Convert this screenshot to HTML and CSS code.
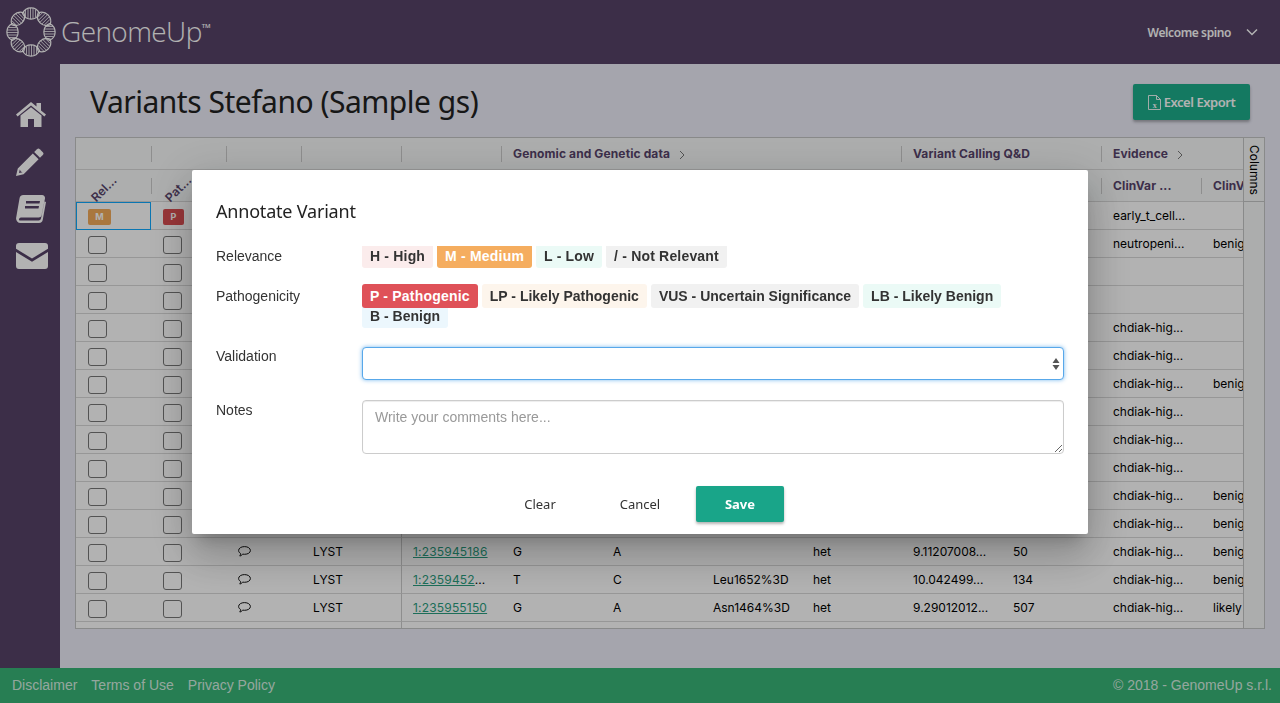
FILE: index.html
```html
<!DOCTYPE html>
<html lang="en">
<head>
<meta charset="utf-8">
<title>GenomeUp - Variants</title>
<link rel="stylesheet" href="styles.css">
</head>
<body>
<svg class="defs" width="0" height="0" aria-hidden="true">
  <defs>
    <g id="helix">
      <path d="M-8.500 0C-5 -7.500 5 -7.500 8.500 0C5 7.500 -5 7.500 -8.500 0Z" fill="none" stroke="#fff" stroke-width="1.200"/>
      <path d="M-5.500 -3.500V3.500M-3 -5V5M-.5 -5.600V5.600M2 -5.300V5.300M4.500 -4V4" stroke="#fff" stroke-width=".8"/>
    </g>
  </defs>
</svg>
<div class="app">
  <header class="topbar">
    <div class="brand">
      <svg class="logo" viewBox="0 0 62 62" width="62" height="62" aria-hidden="true">
        <use href="#helix" transform="translate(31 12.500)"/>
        <use href="#helix" transform="rotate(45 31 31) translate(31 12.500)"/>
        <use href="#helix" transform="rotate(90 31 31) translate(31 12.500)"/>
        <use href="#helix" transform="rotate(135 31 31) translate(31 12.500)"/>
        <use href="#helix" transform="rotate(180 31 31) translate(31 12.500)"/>
        <use href="#helix" transform="rotate(225 31 31) translate(31 12.500)"/>
        <use href="#helix" transform="rotate(270 31 31) translate(31 12.500)"/>
        <use href="#helix" transform="rotate(315 31 31) translate(31 12.500)"/>
      </svg>
      <span class="wordmark">GenomeUp<sup class="tm">TM</sup></span>
    </div>
    <div class="user">
      <span>Welcome spino</span>
      <svg width="12" height="8" viewBox="0 0 12 8" aria-hidden="true"><path d="M1 1.500L6 6.500L11 1.500" fill="none" stroke="#fff" stroke-width="1.500"/></svg>
    </div>
  </header>
  <div class="middle">
    <nav class="sidenav">
      <a class="navitem"><svg width="30" height="25" viewBox="0 0 30 25" aria-hidden="true"><path fill="#fff" d="M15 5.200L4.500 13.600V25H12V17H18V25H25.500V13.600Z"/><path fill="#fff" d="M15 0L20.500 4.600V1H25V8.400L30 12.600L28.400 14.500L15 3.400L1.600 14.500L0 12.600Z"/></svg></a>
      <a class="navitem"><svg width="28" height="28" viewBox="0 0 28 28" aria-hidden="true"><path fill="#fff" d="M21 1.200a2 2 0 0 1 2.800 0l3 3a2 2 0 0 1 0 2.800L24 9.800L18.200 4Z"/><path fill="#fff" fill-rule="evenodd" d="M16.800 5.400L22.600 11.200L7.600 26.200L0 28L1.800 20.400ZM3.800 21.400L3 25L6.600 24.200L4.800 23.600Z"/></svg></a>
      <a class="navitem"><svg width="30" height="28" viewBox="0 0 30 28" aria-hidden="true"><path fill="#fff" fill-rule="evenodd" d="M7.500 0H26a3 3 0 0 1 3 3.400L25.600 20a3 3 0 0 1-3 2.500H5a2 2 0 0 0-2 1.700a1 1 0 0 0 1 1.300H22.500a2.500 2.500 0 0 0 2.500-2L28.500 6.500L30 7L26.800 24.500A4 4 0 0 1 23 28H4.500A4.500 4.500 0 0 1 .1 23L3.500 3.500A4 4 0 0 1 7.500 0ZM10 6V8.500H23.500L24 6ZM9 11V13.500H22.500L23 11Z"/></svg></a>
      <a class="navitem"><svg width="32" height="26" viewBox="0 0 32 26" aria-hidden="true"><path fill="#fff" d="M3 0H29a3 3 0 0 1 3 3V5.800L16 15.500L0 5.800V3a3 3 0 0 1 3-3Z"/><path fill="#fff" d="M0 9L16 18.800L32 9V23a3 3 0 0 1-3 3H3a3 3 0 0 1-3-3Z"/></svg></a>
    </nav>
    <main class="content">
      <div class="titlebar">
        <h1 class="pagetitle">Variants Stefano (Sample gs)</h1>
        <button class="export">
          <svg width="13" height="15" viewBox="0 0 13 15" aria-hidden="true"><path d="M.5 .5H8.500L12.500 4.500V14.500H.5Z M8.500 .5V4.500H12.500" fill="none" stroke="#fff" stroke-width=".9"/><text x="6.500" y="12.500" font-size="8" font-family="Liberation Serif" fill="#fff" text-anchor="middle">x</text></svg>
          <span>Excel Export</span>
        </button>
      </div>
      <section class="grid">
        <div class="gridclip">
          <table class="vtable">
            <colgroup>
              <col class="w75"><col class="w75"><col class="w75"><col class="w100"><col class="w100"><col class="w100"><col class="w100"><col class="w100"><col class="w100"><col class="w100"><col class="w100"><col class="w100"><col class="w100">
            </colgroup>
            <thead>
              <tr class="grouprow">
                <th><div class="hc first"></div></th><th><div class="hc"></div></th><th><div class="hc"></div></th><th><div class="hc"></div></th><th><div class="hc"></div></th>
                <th colspan="4"><div class="hc">Genomic and Genetic data <svg class="more" width="6" height="10" viewBox="0 0 6 10" aria-hidden="true"><path d="M1 1L5 5L1 9" fill="none" stroke="#777" stroke-width="1"/></svg></div></th>
                <th colspan="2"><div class="hc">Variant Calling Q&amp;D</div></th>
                <th colspan="2"><div class="hc">Evidence <svg class="more" width="6" height="10" viewBox="0 0 6 10" aria-hidden="true"><path d="M1 1L5 5L1 9" fill="none" stroke="#777" stroke-width="1"/></svg></div></th>
              </tr>
              <tr class="colrow">
                <th><div class="hc first"><span class="rot">Rel...</span></div></th>
                <th><div class="hc"><span class="rot">Pat...</span></div></th>
                <th colspan="9"></th>
                <th><div class="hc">ClinVar ...</div></th>
                <th><div class="hc">ClinVar ...</div></th>
              </tr>
            </thead>
            <tbody>
              <tr><td class="focus"><span class="tag tag-m">M</span></td><td><span class="tag tag-p">P</span></td><td colspan="2"></td><td class="pin" colspan="7"></td><td>early_t_cell...</td><td></td></tr>
              <tr><td><span class="chk"></span></td><td><span class="chk"></span></td><td colspan="2"></td><td class="pin" colspan="7"></td><td>neutropeni...</td><td>benign</td></tr>
              <tr><td><span class="chk"></span></td><td><span class="chk"></span></td><td colspan="2"></td><td class="pin" colspan="7"></td><td></td><td></td></tr>
              <tr><td><span class="chk"></span></td><td><span class="chk"></span></td><td colspan="2"></td><td class="pin" colspan="7"></td><td></td><td></td></tr>
              <tr><td><span class="chk"></span></td><td><span class="chk"></span></td><td colspan="2"></td><td class="pin" colspan="7"></td><td>chdiak-hig...</td><td></td></tr>
              <tr><td><span class="chk"></span></td><td><span class="chk"></span></td><td colspan="2"></td><td class="pin" colspan="7"></td><td>chdiak-hig...</td><td></td></tr>
              <tr><td><span class="chk"></span></td><td><span class="chk"></span></td><td colspan="2"></td><td class="pin" colspan="7"></td><td>chdiak-hig...</td><td>benign</td></tr>
              <tr><td><span class="chk"></span></td><td><span class="chk"></span></td><td colspan="2"></td><td class="pin" colspan="7"></td><td>chdiak-hig...</td><td></td></tr>
              <tr><td><span class="chk"></span></td><td><span class="chk"></span></td><td colspan="2"></td><td class="pin" colspan="7"></td><td>chdiak-hig...</td><td></td></tr>
              <tr><td><span class="chk"></span></td><td><span class="chk"></span></td><td colspan="2"></td><td class="pin" colspan="7"></td><td>chdiak-hig...</td><td></td></tr>
              <tr><td><span class="chk"></span></td><td><span class="chk"></span></td><td colspan="2"></td><td class="pin" colspan="7"></td><td>chdiak-hig...</td><td>benign</td></tr>
              <tr><td><span class="chk"></span></td><td><span class="chk"></span></td><td colspan="2"></td><td class="pin" colspan="7"></td><td>chdiak-hig...</td><td>benign</td></tr>
              <tr><td><span class="chk"></span></td><td><span class="chk"></span></td><td class="ctr"><svg class="bubble" width="13" height="11" viewBox="0 0 13 11" aria-hidden="true"><path d="M6.500 .6C9.800 .6 12.400 2.200 12.400 4.500C12.400 6.800 9.800 8.300 6.500 8.300C5.800 8.300 5.200 8.200 4.600 8.100C3.900 9.200 2.800 9.900 1.800 10C2.300 9.200 2.600 8.400 2.600 7.500C1.300 6.700 .6 5.700 .6 4.500C.6 2.200 3.200 .6 6.500 .6Z" fill="none" stroke="#111" stroke-width="1"/></svg></td><td>LYST</td><td class="pin"><a class="poslink">1:235945186</a></td><td>G</td><td>A</td><td></td><td>het</td><td>9.11207008...</td><td>50</td><td>chdiak-hig...</td><td>benign</td></tr>
              <tr><td><span class="chk"></span></td><td><span class="chk"></span></td><td class="ctr"><svg class="bubble" width="13" height="11" viewBox="0 0 13 11" aria-hidden="true"><path d="M6.500 .6C9.800 .6 12.400 2.200 12.400 4.500C12.400 6.800 9.800 8.300 6.500 8.300C5.800 8.300 5.200 8.200 4.600 8.100C3.900 9.200 2.800 9.900 1.800 10C2.300 9.200 2.600 8.400 2.600 7.500C1.300 6.700 .6 5.700 .6 4.500C.6 2.200 3.200 .6 6.500 .6Z" fill="none" stroke="#111" stroke-width="1"/></svg></td><td>LYST</td><td class="pin"><a class="poslink">1:2359452</a>...</td><td>T</td><td>C</td><td>Leu1652%3D</td><td>het</td><td>10.042499...</td><td>134</td><td>chdiak-hig...</td><td>benign</td></tr>
              <tr><td><span class="chk"></span></td><td><span class="chk"></span></td><td class="ctr"><svg class="bubble" width="13" height="11" viewBox="0 0 13 11" aria-hidden="true"><path d="M6.500 .6C9.800 .6 12.400 2.200 12.400 4.500C12.400 6.800 9.800 8.300 6.500 8.300C5.800 8.300 5.200 8.200 4.600 8.100C3.900 9.200 2.800 9.900 1.800 10C2.300 9.200 2.600 8.400 2.600 7.500C1.300 6.700 .6 5.700 .6 4.500C.6 2.200 3.200 .6 6.500 .6Z" fill="none" stroke="#111" stroke-width="1"/></svg></td><td>LYST</td><td class="pin"><a class="poslink">1:235955150</a></td><td>G</td><td>A</td><td>Asn1464%3D</td><td>het</td><td>9.29012012...</td><td>507</td><td>chdiak-hig...</td><td>likely</td></tr>
              <tr class="tail"><td colspan="4"></td><td class="pin" colspan="9"></td></tr>
            </tbody>
          </table>
        </div>
        <aside class="sidebar"><div class="sidetab"><span>Columns</span></div></aside>
      </section>
    </main>
  </div>
  <footer class="footer">
    <div class="footlinks"><a>Disclaimer</a><a>Terms of Use</a><a>Privacy Policy</a></div>
    <div>© 2018 - GenomeUp s.r.l.</div>
  </footer>
</div>
<div class="backdrop">
  <div class="modal">
    <h2 class="modaltitle">Annotate Variant</h2>
    <div class="form">
      <label class="flabel lab-rel">Relevance</label>
      <div class="chips chips-rel">
        <span class="chip c-red">H - High</span>
        <span class="chip c-orange on">M - Medium</span>
        <span class="chip c-mint">L - Low</span>
        <span class="chip c-grey">/ - Not Relevant</span>
      </div>
      <label class="flabel lab-path">Pathogenicity</label>
      <div class="chips chips-path">
        <span class="chip c-danger on">P - Pathogenic</span>
        <span class="chip c-cream">LP - Likely Pathogenic</span>
        <span class="chip c-grey">VUS - Uncertain Significance</span>
        <span class="chip c-mint">LB - Likely Benign</span>
        <span class="chip c-sky">B - Benign</span>
      </div>
      <label class="flabel lab-val">Validation</label>
      <div class="selectwrap">
        <select class="select"><option></option></select>
        <svg class="updown" width="8" height="14" viewBox="0 0 8 14" aria-hidden="true"><path fill="#555" d="M4 1L7.500 6H.5ZM4 13L.5 8H7.500Z"/></svg>
      </div>
      <label class="flabel lab-notes">Notes</label>
      <textarea class="notes" placeholder="Write your comments here..."></textarea>
    </div>
    <div class="actions">
      <button class="btn">Clear</button>
      <button class="btn">Cancel</button>
      <button class="btn save">Save</button>
    </div>
  </div>
</div>
</body>
</html>
```

FILE: styles.css
```css
* { box-sizing: border-box; }
html, body { margin: 0; height: 100%; overflow: hidden; }
body { font-family: "Liberation Sans", Arial, sans-serif; color: #222; background: #ececf8; }
.defs { position: absolute; }
.app { height: 703px; display: flex; flex-direction: column; }

.topbar { height: 64px; flex: none; background: #574368; display: flex; align-items: center; justify-content: space-between; padding: 0 22px 0 0; color: #fff; }
.brand { display: flex; align-items: center; }
.logo { display: block; }
.wordmark { font-family: "Open Sans", sans-serif; font-weight: 300; font-size: 28px; letter-spacing: -.6px; line-height: 1; margin-top: -2px; margin-left: -1px; }
.tm { font-size: 6px; font-weight: 600; letter-spacing: 0; vertical-align: 14px; line-height: 0; }
.user { display: flex; align-items: center; gap: 15px; font-family: "Noto Sans", sans-serif; font-size: 12px; font-weight: 600; letter-spacing: -.4px; }

.middle { flex: 1; display: flex; min-height: 0; }
.sidenav { width: 60px; flex: none; background: #574368; padding-top: 27px; display: flex; flex-direction: column; }
.navitem { height: 47px; display: flex; align-items: center; padding-left: 16px; }

.content { flex: 1; min-width: 0; padding: 20px 15px 0 15px; display: flex; flex-direction: column; }
.titlebar { height: 53px; display: flex; justify-content: space-between; align-items: flex-start; padding: 0 15px 0 15px; }
.pagetitle { margin: 0; font-family: "Noto Sans", sans-serif; font-weight: 400; font-size: 30px; line-height: 36px; color: #222; letter-spacing: -.48px; }
.export { width: 117px; height: 36px; border: 0; border-radius: 2px; background: #1dae8c; color: #fff; display: flex; align-items: center; justify-content: center; gap: 3px; font-family: "Noto Sans", sans-serif; font-size: 13px; font-weight: 600; letter-spacing: -.45px; padding: 0; box-shadow: 0 2px 3px rgba(0,0,0,.3); }

.grid { display: flex; height: 492px; border: 1px solid #c4c6c6; background: #fff; }
.gridclip { flex: 1; min-width: 0; overflow: hidden; }
.sidebar { width: 21px; flex: none; border-left: 1px solid #c4c6c6; background: #f6f8f8; }
.sidetab { height: 64px; border-bottom: 1px solid #c4c6c6; display: flex; justify-content: center; padding-top: 7px; font-family: Inter, sans-serif; font-size: 12px; color: #000; }
.sidetab span { writing-mode: vertical-rl; }

.vtable { width: 1225px; table-layout: fixed; border-collapse: separate; border-spacing: 0; font-family: Inter, sans-serif; font-size: 12px; color: #000; }
.w75 { width: 75px; }
.w100 { width: 100px; }
.vtable th { padding: 0; text-align: left; font-weight: 700; color: #57436a; background: #f8fafa; border-bottom: 1px solid #d9d9d9; white-space: nowrap; letter-spacing: .12px; }
.grouprow th { height: 32px; }
.colrow th { height: 32px; }
.hc { height: 16px; line-height: 16px; padding-left: 11px; border-left: 1px solid #ccc; overflow: visible; }
.hc.first { border-left: 0; padding-left: 13px; }
.more { margin-left: 6px; vertical-align: -2px; }
.rot { display: inline-block; font-weight: 600; transform: translateY(3px) rotate(-45deg); transform-origin: center; }

.vtable td { height: 28px; padding: 0 0 0 12px; border-bottom: 1px solid #d9d9d9; white-space: nowrap; overflow: hidden; background: #fff; line-height: 27px; }
.vtable td.pin { border-left: 1px solid #ccc; padding-left: 11px; }
.vtable td.ctr { padding-left: 12px; }
.vtable td.focus { border: 1px solid #0fa9ff; padding-left: 11px; }
.vtable .tail td { height: 6px; line-height: 0; border-bottom: 0; }
.chk { display: block; width: 19px; height: 18px; border: 1px solid #777; border-radius: 3px; margin-top: 3px; }
.tag { display: block; height: 16px; line-height: 16px; border-radius: 2px; color: #fff; font-size: 9px; font-weight: 700; text-align: center; margin-top: 2px; }
.tag-m { width: 23px; background: #f3ab5b; }
.tag-p { width: 21px; background: #db4e52; }
.bubble { display: block; }
.poslink { color: #2a9e80; text-decoration: underline; letter-spacing: .18px; }

.footer { height: 35px; flex: none; background: #38b578; color: rgba(255,255,255,.8); display: flex; justify-content: space-between; align-items: center; padding: 0 8px 2px 12px; font-size: 14px; }
.footlinks { display: flex; gap: 14px; }

.backdrop { position: fixed; inset: 0; background: rgba(0,0,0,.3); display: flex; align-items: center; justify-content: center; }
.modal { width: 896px; height: 364px; background: #fff; border-radius: 2px; padding: 30px 24px 0; box-shadow: 0 11px 15px -7px rgba(0,0,0,.2), 0 24px 38px 3px rgba(0,0,0,.14), 0 9px 46px 8px rgba(0,0,0,.12); }
.modaltitle { margin: 0; font-family: "Noto Sans", sans-serif; font-weight: 400; font-size: 18px; line-height: 22px; color: #222; letter-spacing: -.2px; }
.form { display: grid; grid-template-columns: 146px 1fr; margin-top: 24px; }
.flabel { font-size: 14px; line-height: 20px; color: #333; }
.lab-path { padding-top: 2px; }
.lab-val { margin-top: -1px; }
.chips { display: flex; flex-wrap: wrap; gap: 0 4px; align-content: flex-start; font-size: 14px; font-weight: 700; color: #333; }
.chips-rel { height: 22px; overflow: hidden; margin-bottom: 16px; letter-spacing: .18px; }
.chips-rel .chip { margin-top: -2px; }
.chips-path { height: 44px; margin-bottom: 19px; }
.chip { height: 24px; line-height: 24px; padding: 0 8px; border-radius: 3px; margin-bottom: -4px; }
.chip.on { color: #fff; position: relative; letter-spacing: .2px; }
.c-red { background: #fbecec; }
.c-orange { background: #f5ad5f; }
.c-mint { background: #ebfaf6; }
.c-grey { background: #f1f1f1; }
.c-danger { background: #df5158; }
.c-cream { background: #fdf5ec; }
.c-sky { background: #ecf7fd; }
.selectwrap { position: relative; height: 33px; margin-bottom: 20px; }
.select { width: 100%; height: 33px; appearance: none; -webkit-appearance: none; background: #fff; border: 1px solid #58a8ea; border-radius: 4px; box-shadow: 0 0 4px rgba(88,168,234,.8); outline: 0; }
.updown { position: absolute; right: 4px; top: 10px; }
.notes { width: 100%; height: 54px; resize: vertical; border: 1px solid #ccc; border-radius: 4px; padding: 6px 12px; font-family: "Liberation Sans", Arial, sans-serif; font-size: 14px; line-height: 20px; color: #333; display: block; box-shadow: inset 0 1px 1px rgba(0,0,0,.075); outline: 0; }
.notes::placeholder { color: #999; opacity: 1; }
.actions { display: flex; justify-content: center; gap: 12px; margin-top: 32px; }
.btn { width: 88px; height: 36px; border: 0; background: transparent; border-radius: 2px; padding: 0; font-family: "Noto Sans", sans-serif; font-size: 13px; color: #333; }
.btn.save { background: #19a589; color: #fff; font-weight: 700; box-shadow: 0 2px 3px rgba(0,0,0,.3); }
```
